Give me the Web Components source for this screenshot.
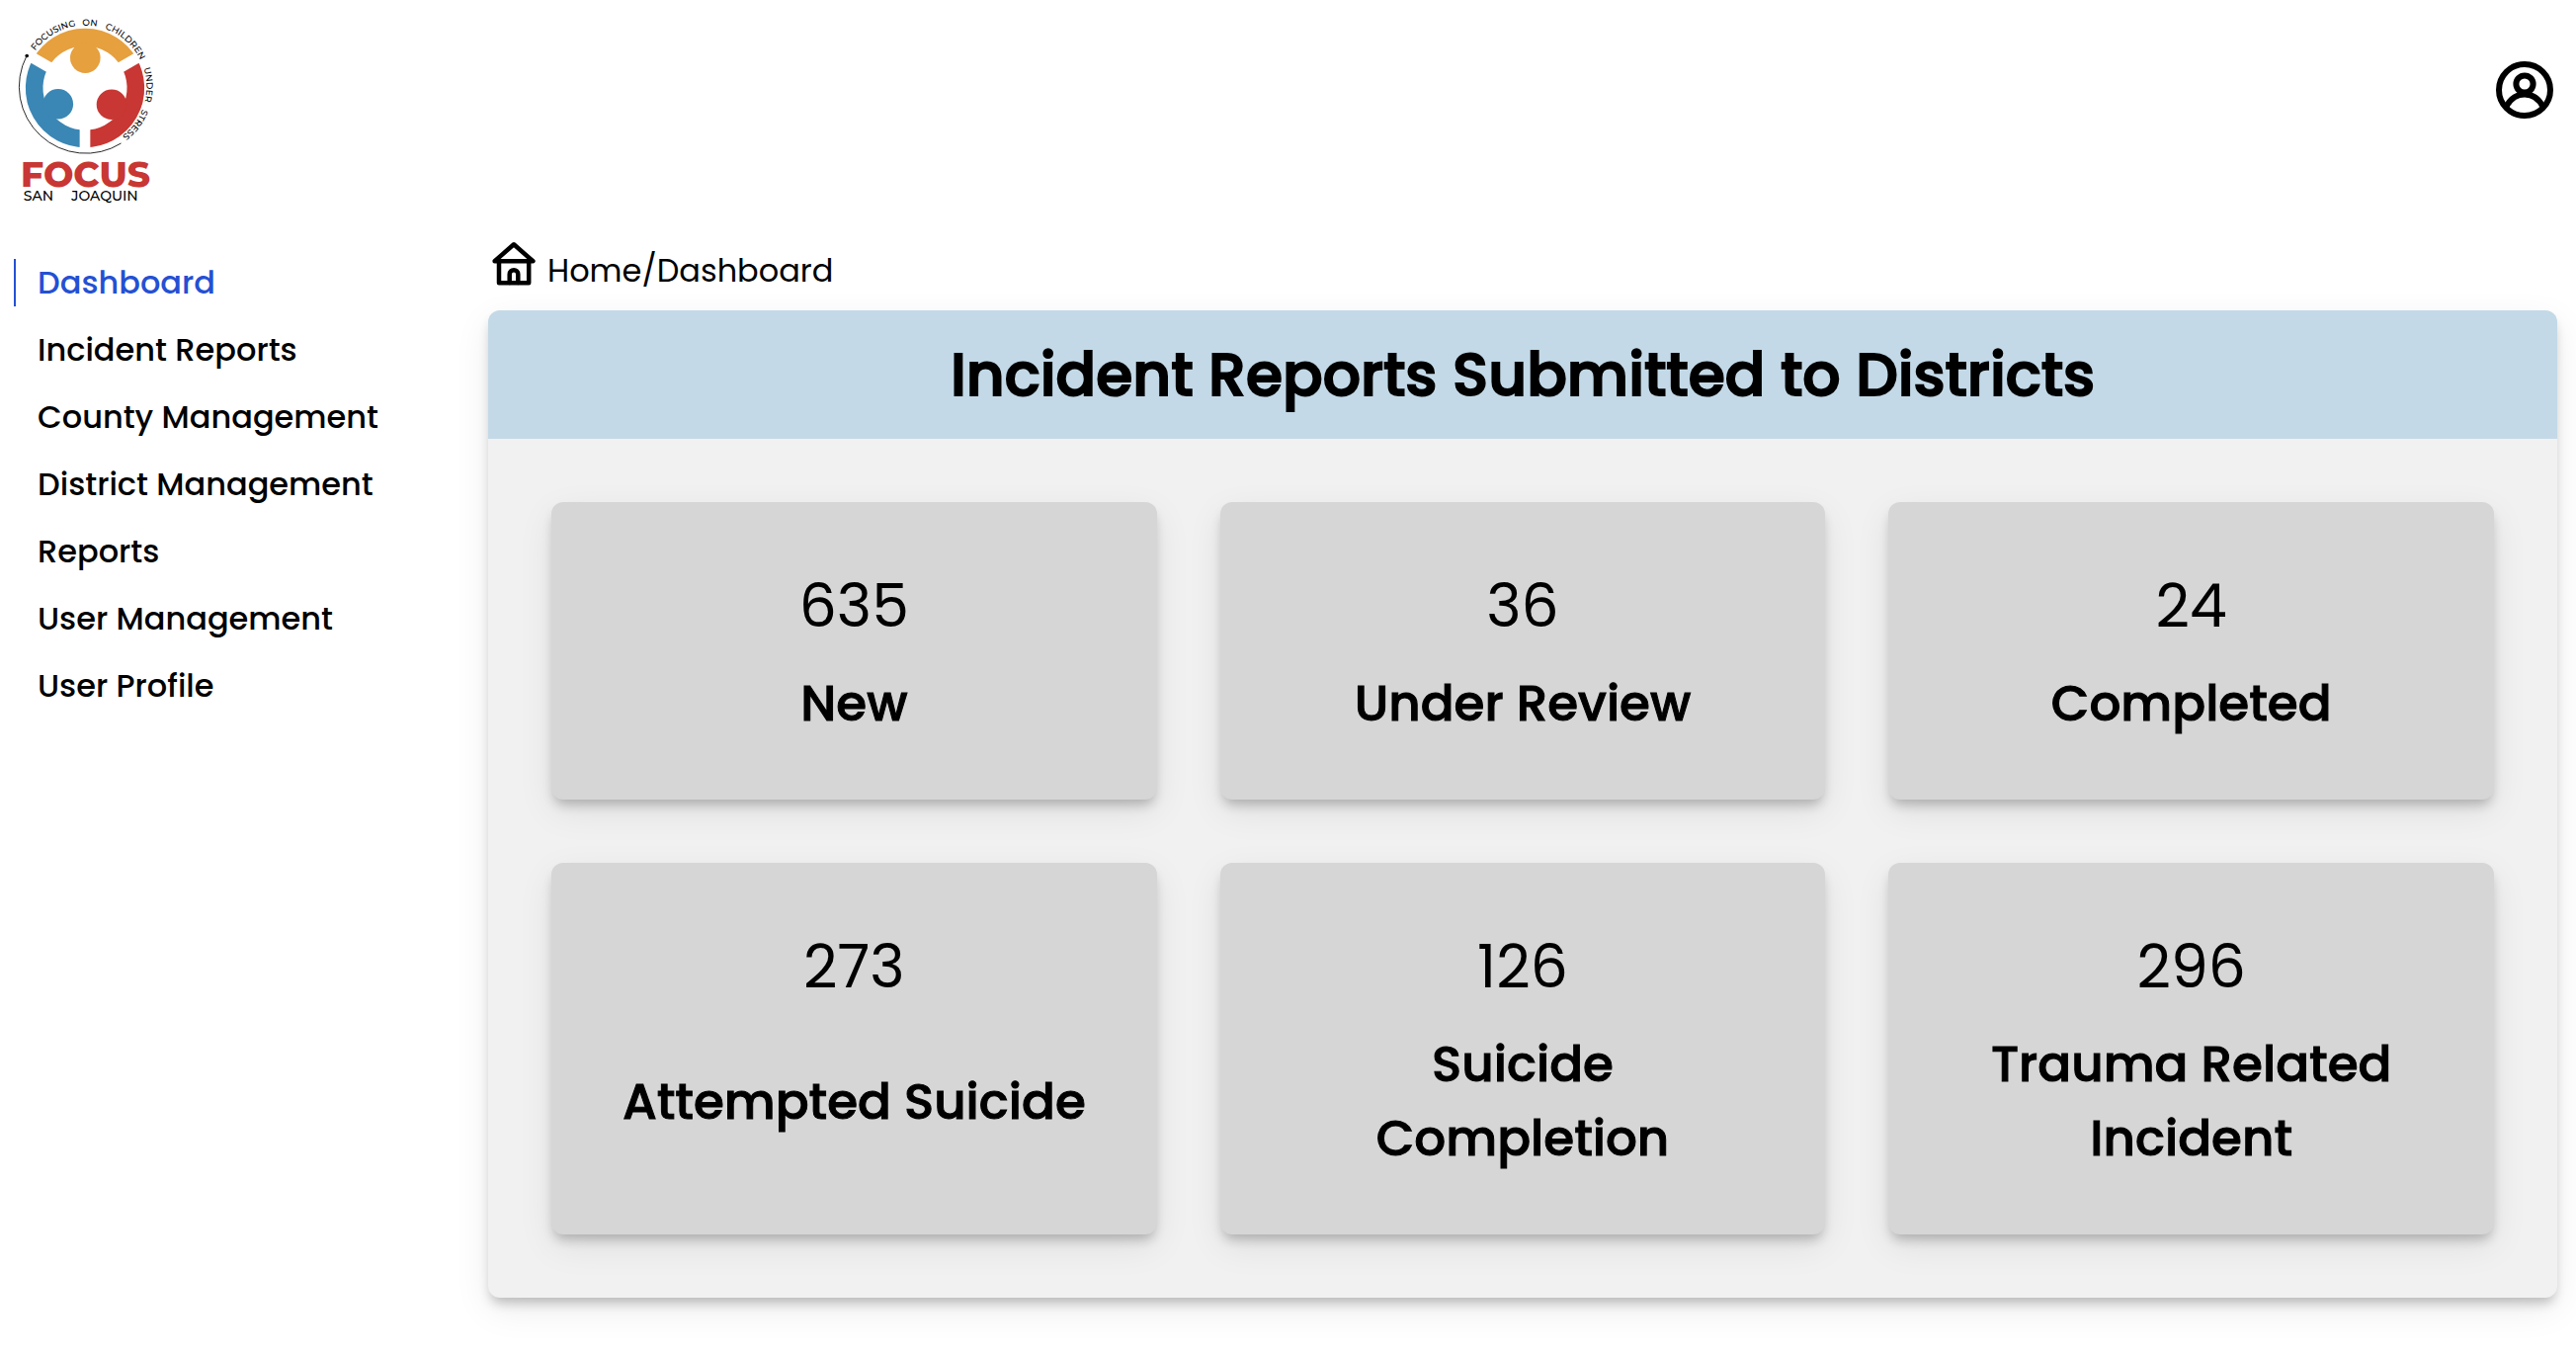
<!DOCTYPE html>
<html lang="en">
<head>
<meta charset="utf-8">
<title>FOCUS San Joaquin – Dashboard</title>
<style>
  html, body { margin: 0; background: #fff; }
  body { font-family: Poppins, Inter, "Open Sans", sans-serif; color: #000; }
</style>
</head>
<body>
<focus-app></focus-app>

<template id="t-app">
  <style>
    :host { display: block; min-height: 100vh; }
    .body { display: flex; align-items: flex-start; padding: 0 19px 59px 14px; }
    focus-nav { flex: 0 0 480px; }
    main { flex: 1 1 0; min-width: 0; }
  </style>
  <focus-header></focus-header>
  <div class="body">
    <focus-nav></focus-nav>
    <main>
      <focus-crumbs></focus-crumbs>
      <report-panel>
        <span slot="title">Incident Reports Submitted to Districts</span>
        <stat-card value="635">New</stat-card>
        <stat-card value="36">Under Review</stat-card>
        <stat-card value="24">Completed</stat-card>
        <stat-card value="273">Attempted Suicide</stat-card>
        <stat-card value="126">Suicide Completion</stat-card>
        <stat-card value="296">Trauma Related Incident</stat-card>
      </report-panel>
    </main>
  </div>
</template>

<template id="t-header">
  <style>
    :host { display: block; }
    header { display: flex; justify-content: space-between; align-items: flex-start; padding: 0 23px 32px 14px; }
    a, svg { display: block; }
    button { margin: 62px 0 0; padding: 0; border: 0; background: none; cursor: pointer; }
  </style>
  <header>
    <a href="#" aria-label="FOCUS San Joaquin"><focus-logo></focus-logo></a>
    <button type="button" aria-label="Account">
      <svg width="58" height="58" viewBox="0 0 58 58" fill="none" stroke="#000" stroke-width="6">
        <circle cx="29" cy="29" r="26"/>
        <circle cx="29" cy="23" r="8.6"/>
        <path d="M10.5 46C14.500 38 21 33.500 29 33.500S43.500 38 47.500 46"/>
      </svg>
    </button>
  </header>
</template>

<template id="t-logo">
  <style>
    :host { display: block; }
    svg { display: block; }
    .ring { font: 500 9px Montserrat, Poppins, sans-serif; }
    .name { font: 800 36px Montserrat, Poppins, sans-serif; fill: #c83733; }
    .place { font: 500 14px Montserrat, Poppins, sans-serif; }
  </style>
  <svg width="148" height="210" viewBox="14 0 148 210" role="img" aria-label="Focusing on Children Under Stress">
    <g fill="none" stroke-width="17.600">
      <path stroke="#3a87b5" d="M86 140.350A51.350 51.350 0 0 1 41.530 63.330"/>
      <path stroke="#e6a03e" d="M41.530 63.330A51.350 51.350 0 0 1 130.470 63.330"/>
      <path stroke="#c83733" d="M130.470 63.330A51.350 51.350 0 0 1 86 140.350"/>
      <path stroke="#fff" stroke-width="10.700" d="M86 127V153M53.100 70L30.600 57M118.900 70L141.400 57"/>
    </g>
    <circle cx="86.300" cy="58.600" r="15.300" fill="#e6a03e"/>
    <circle cx="58.800" cy="105.200" r="15.300" fill="#3a87b5"/>
    <circle cx="113" cy="105.700" r="15.300" fill="#c83733"/>
    <path d="M27 56.500A67.500 67.500 0 0 0 122.500 145" fill="none" stroke="#111" stroke-width=".9"/>
    <circle cx="27.200" cy="56.500" r="1.800"/>
    <path id="arc" fill="none" d="M34.970 52.270A62.300 62.300 0 1 1 86 150.300"/>
    <g class="ring">
      <text><textPath href="#arc" startOffset="1">FOCUSING</textPath></text>
      <text><textPath href="#arc" startOffset="57">ON</textPath></text>
      <text><textPath href="#arc" startOffset="80">CHILDREN</textPath></text>
      <text><textPath href="#arc" startOffset="138">UNDER</textPath></text>
      <text><textPath href="#arc" startOffset="180">STRESS</textPath></text>
    </g>
    <text class="name" x="86.500" y="189" text-anchor="middle">FOCUS</text>
    <text class="place" x="39" y="203" text-anchor="middle">SAN</text>
    <text class="place" x="106" y="203" text-anchor="middle">JOAQUIN</text>
  </svg>
</template>

<template id="t-nav">
  <style>
    :host { display: block; padding-top: 20px; }
    ul { list-style: none; margin: 0; padding: 0; display: flex; flex-direction: column; gap: 20px; }
    a { display: block; border-left: 2px solid transparent; padding-left: 22px; font-size: 32px; line-height: 48px; font-weight: 500; color: #000; text-decoration: none; }
    a[aria-current] { color: #2450d3; border-color: #2450d3; }
  </style>
  <nav aria-label="Main">
    <ul>
      <li><a href="#dashboard" aria-current="page">Dashboard</a></li>
      <li><a href="#incidents">Incident Reports</a></li>
      <li><a href="#county">County Management</a></li>
      <li><a href="#district">District Management</a></li>
      <li><a href="#reports">Reports</a></li>
      <li><a href="#users">User Management</a></li>
      <li><a href="#profile">User Profile</a></li>
    </ul>
  </nav>
</template>

<template id="t-crumbs">
  <style>
    :host { display: block; }
    nav { display: flex; align-items: flex-start; gap: 12px; padding: 2px 0 10px 4px; font-size: 32px; line-height: 60px; }
    svg { display: block; }
    a { color: inherit; text-decoration: none; }
  </style>
  <nav aria-label="Breadcrumb">
    <svg width="44" height="46" viewBox="498 244 44 46" fill="none" stroke="#000" stroke-width="4.500" stroke-linejoin="round" stroke-linecap="round" aria-hidden="true">
      <path d="M500.600 264.300L520 247.300L539.400 264.300Z"/>
      <path d="M505 265V286.200H535.200V265"/>
      <path d="M515.700 286V277.500A4.300 4.300 0 0 1 524.300 277.500V286"/>
    </svg>
    <span><a href="#home">Home</a>/<a href="#dashboard">Dashboard</a></span>
  </nav>
</template>

<template id="t-panel">
  <style>
    :host { display: block; background: #f1f1f1; border-radius: 12px; box-shadow: 0 8px 12px -3px rgba(0,0,0,.24), 0 12px 36px rgba(0,0,0,.08); }
    h1 { margin: 0; padding: 20px; background: #c3d9e7; border-radius: 12px 12px 0 0; text-align: center; font-size: 60px; line-height: 90px; font-weight: 500; -webkit-text-stroke: 2px currentColor; }
    .grid { display: grid; grid-template-columns: repeat(3, minmax(0, 1fr)); gap: 64px; padding: 64px; }
  </style>
  <h1><slot name="title"></slot></h1>
  <div class="grid"><slot></slot></div>
</template>

<template id="t-card">
  <style>
    :host { display: flex; flex-direction: column; align-items: center; gap: 20px; padding: 64px 64px 60px; background: #d6d6d6; border-radius: 12px; text-align: center; box-shadow: 0 8px 12px -3px rgba(0,0,0,.24), 0 12px 36px rgba(0,0,0,.08); }
    .value { font-size: 60px; line-height: 82px; }
    .label { flex: 1; display: flex; align-items: center; font-size: 50px; line-height: 75px; font-weight: 500; -webkit-text-stroke: 1px currentColor; }
  </style>
  <div class="value"></div>
  <div class="label"><span><slot></slot></span></div>
</template>

<script>
  const define = (tag, id, setup) => customElements.define(tag, class extends HTMLElement {
    connectedCallback() {
      if (this.shadowRoot) return;
      const root = this.attachShadow({ mode: "open" });
      root.append(document.getElementById(id).content.cloneNode(true));
      if (setup) setup(this, root);
    }
  });
  define("focus-logo", "t-logo");
  define("focus-header", "t-header");
  define("focus-nav", "t-nav");
  define("focus-crumbs", "t-crumbs");
  define("stat-card", "t-card", (el, root) => {
    root.querySelector(".value").textContent = el.getAttribute("value");
  });
  define("report-panel", "t-panel");
  define("focus-app", "t-app");
</script>
</body>
</html>
